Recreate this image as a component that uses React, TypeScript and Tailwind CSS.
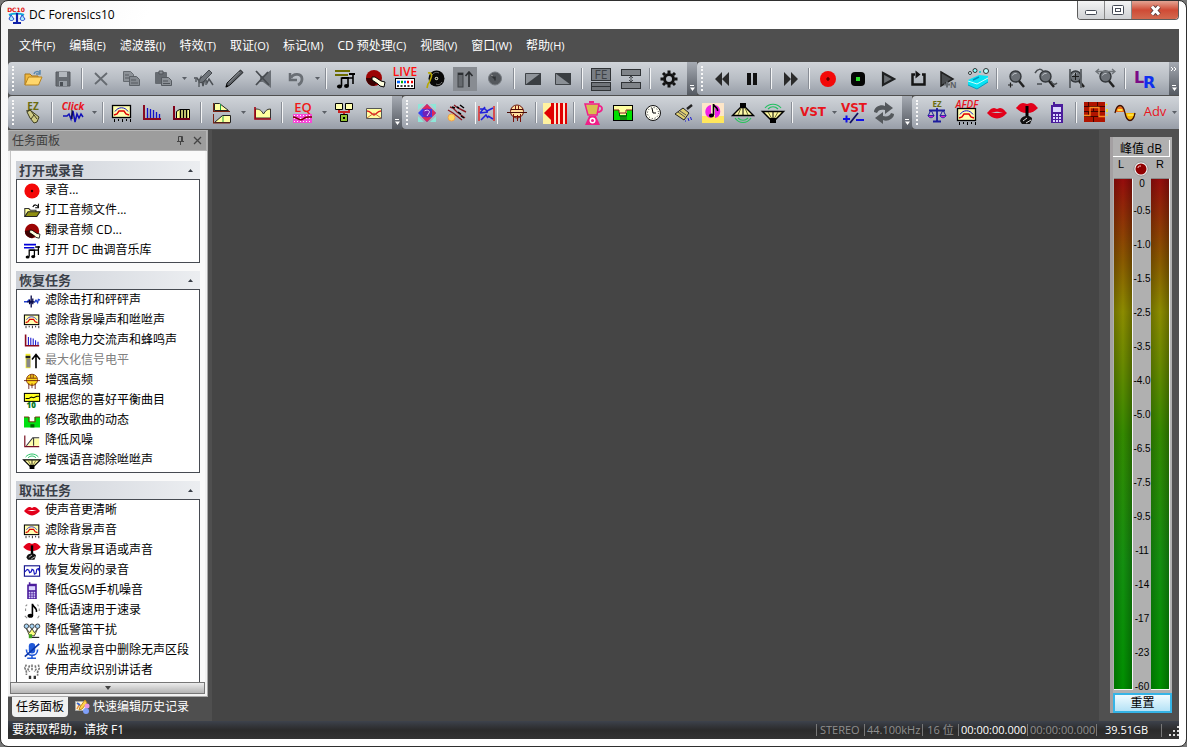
import React from "react";
import type { ReactNode } from "react";

function Icon({ children }: { children: ReactNode }) {
  return (
    <svg width="24" height="24" viewBox="0 0 24 24" fill="none" aria-hidden="true" className="shrink-0 overflow-visible">
      {children}
    </svg>
  );
}

const sans = "Open Sans, sans-serif";
const wide = "DejaVu Sans, sans-serif";

const notes = (bar: string) => (
  <>
    <path d="M2 4h15M2 8h13" stroke={bar} strokeWidth="2" />
    <path d="M8.500 19v-8h6M20 6v11M15 19v-8h5" stroke="#000" strokeWidth="1.600" />
    <ellipse cx="6.500" cy="19.500" rx="2.500" ry="2" fill="#000" />
    <ellipse cx="13.500" cy="19" rx="2.500" ry="2" fill="#000" />
    <path d="M16 7h6M9 11h7" stroke="#000" strokeWidth="2" />
  </>
);

const meterBox = (
  <>
    <rect x="2.500" y="4.500" width="18" height="12" fill="#ffffb0" stroke="#000" strokeWidth="1.300" />
    <path d="M5 10.500c3-5 10-5 13 0" stroke="#1818d0" />
    <path d="M4 14l3-1 2-3h5l2 3 3 1" stroke="#e00000" strokeWidth="1.400" />
    <path d="M4.500 18v3M8.500 18v2M12.500 18v3M16.500 18v2M20.500 18v3" stroke="#000" />
  </>
);

const lips = (
  <path d="M2 12c2-2 4-5 7-5 1.500 0 2 1 3 1s1.500-1 3-1c3 0 5 3 7 5-3 3-6 5.500-10 5.500S5 15 2 12zM6 12h12l-5-1.200h-2z" fill="#e2001a" fillRule="evenodd" />
);

const lens = (
  <>
    <circle cx="11.500" cy="9.500" r="5.500" fill="#6b7076" stroke="#33373b" strokeWidth="1.400" />
    <path d="M8.500 8.500c1-2 2-2 4-2" stroke="#c4c9ce" />
    <path d="M15 14l5 6" stroke="#222" strokeWidth="2.500" />
  </>
);

const shush = (
  <>
    <path d="M1 7c2-2 4-5 7-5 2 0 3 1 4 1s2-1 4-1c3 0 5 3 7 5-3 3-6 5-11 5S4 10 1 7z" fill="#e2001a" />
    <path d="M10.500 5h3v11h-3z" fill="#000" />
    <path d="M5 20c1-4 4-5 7-5 4 0 5 2 5 3l-2 5H7z" fill="#111" />
    <path d="M8 20l4-3M11 22l5-3" stroke="#ddd" />
  </>
);

const phone = (
  <>
    <path d="M6 4h2V1h2v2h8v19H6z" fill="#4a1c9c" />
    <rect x="8" y="6" width="8" height="5" fill="#dcd5ff" />
    <path d="M8 14h2M11 14h2M14 14h2M8 17h2M11 17h2M14 17h2M8 20h2M11 20h2M14 20h2" stroke="#dcd5ff" strokeWidth="2" />
  </>
);

const scales = (
  <>
    <path d="M12 7v14M4 9.500h16M8 20.500h8" stroke="#1c1c9c" strokeWidth="1.800" />
    <path d="M6 9l-3 6h6zM18 9l-3 6h6z" stroke="#1c1c9c" />
    <path d="M3 14.500c1 3 5 3 6 0zM15 14.500c1 3 5 3 6 0z" fill="#d818d8" stroke="#1c1c9c" strokeWidth="0.800" />
  </>
);

const tube = (
  <>
    <circle cx="12" cy="10.500" r="6.500" fill="#ffdf9c" stroke="#6a1208" />
    <path d="M6 8.500h12M6 11.500h16M2 11.500h4" stroke="#4a0a04" />
    <path d="M10.500 5v3M13.500 5v3M8.500 13v8M12.500 14v6M15.500 13v8M9 15.500h7" stroke="#7a1208" />
  </>
);

const cone = (
  <>
    <path d="M1.500 10.500h21l-8 8h-5z" fill="#fff9a0" stroke="#000" strokeWidth="1.500" />
    <path d="M7 11l4 7M17 11l-4 7" stroke="#6a6a30" />
    <path d="M12 11v7" stroke="#000" />
    <path d="M9 17h6v5H9z" fill="#000" />
    <path d="M4 7c4-5 12-5 16 0M7 8c3-3 7-3 10 0" stroke="#20c060" strokeWidth="1.200" />
  </>
);

const spectrum = (
  <>
    <path d="M4 4v14h17" stroke="#8a0a20" strokeWidth="2" />
    <path d="M7.500 7v10M10.500 8v9M13.500 9v8M16.500 11v6M19.500 13v4" stroke="#1010cc" strokeWidth="1.300" />
  </>
);

const wave = <path d="M2 13h4l2-3 2 5 2-9 2 13 2-8 2 3 2-5 2 3" stroke="#1010c0" strokeWidth="1.500" />;

const redDisc = (
  <>
    <circle cx="12" cy="12" r="8" fill="#f40808" />
    <path d="M12 10v4M10 12h4" stroke="#400" strokeWidth="1.200" />
  </>
);

const ripDisc = (
  <>
    <circle cx="11" cy="11" r="8" fill="#9c0404" />
    <path d="M3 11a8 8 0 0 0 8 8l3-3-6-5z" fill="#3e0202" />
    <path d="M9 10l3 0 6 4 4 1-1 5-4-1-2-2-6-4z" fill="#ffffe0" stroke="#000" />
  </>
);

const noteSingle = (
  <>
    <path d="M12.500 18V3c0 4 6 4 5 10" stroke="#000" strokeWidth="2" />
    <ellipse cx="10" cy="18" rx="3.500" ry="2.500" fill="#000" />
  </>
);

type Item =
  | { kind: "button"; label: string; art: ReactNode; menu?: boolean; pressed?: boolean }
  | { kind: "sep" };

const b = (label: string, art: ReactNode, menu = false, pressed = false): Item => ({ kind: "button", label, art, menu, pressed });
const sep: Item = { kind: "sep" };

const fileTools: Item[] = [
  b("打开", <Icon>
    <path d="M4 18V7h5l2 2h6v3" fill="#f0b93e" stroke="#a97417" />
    <path d="M4 18l3.500-8H21l-3.500 8z" fill="#ffd66b" stroke="#b98420" />
    <path d="M13 7c1-3 4-3 6-1M19 3v4h-4" stroke="#5b88ad" strokeWidth="1.500" />
  </Icon>),
  b("保存", <Icon>
    <path d="M5 5h14v14H5z" fill="#686d73" stroke="#565b61" />
    <path d="M8 5h8v5H8z" fill="#b3b8be" />
    <path d="M8 14h8v5H8z" fill="#999fa6" />
    <path d="M9 15h3v4H9z" fill="#4a4f55" />
  </Icon>),
  sep,
  b("删除", <Icon><path d="M6 6l12 12M18 6L6 17" stroke="#666b71" strokeWidth="1.800" /></Icon>),
  b("复制", <Icon>
    <path d="M4.500 4.500h7l3 3v7h-10z" fill="#8d9298" stroke="#666b71" />
    <path d="M10.500 9.500h7l3 3v6h-10z" fill="#858a90" stroke="#5d6268" />
    <path d="M6 8h4M6 11h4M12 13h5M12 16h7" stroke="#565b61" />
  </Icon>),
  b("粘贴", <Icon>
    <rect x="4" y="5" width="12" height="12" rx="1" fill="#666b71" />
    <path d="M8 4h4v3H8z" fill="#8d9298" stroke="#50555b" />
    <path d="M10.500 10.500h7l3 3v5h-10z" fill="#8c9197" stroke="#565b61" />
    <path d="M12 14h5M12 16.500h7" stroke="#50555b" />
  </Icon>, true),
  b("波形编辑", <Icon>
    <path d="M2 11h3l2 3 2-4 2 9 2-8 2 5 2-4 4 6" stroke="#4c5055" strokeWidth="1.500" />
    <path d="M17 3l3 3-9 9-4 1 1-4z" fill="#6f747a" stroke="#45494e" />
    <path d="M7 12v8M14 13v5M4 12v3" stroke="#5a5f65" strokeWidth="1.500" />
  </Icon>),
  b("铅笔", <Icon>
    <path d="M18.500 3l2.500 2.500L8 18l-4 2 1-4z" fill="#5a5e63" stroke="#17191b" />
    <path d="M17.500 5L7 15.500" stroke="#92979c" />
    <path d="M3.500 20.500l1-3 2 2z" fill="#000" />
  </Icon>),
  b("静音", <Icon>
    <path d="M8 9h3l8-6v18l-8-6H8z" fill="#6a6f75" />
    <path d="M4 4l13 14M16 5L4 18" stroke="#484c51" strokeWidth="1.800" />
  </Icon>),
  b("撤消", <Icon>
    <path d="M6 6v7h7" stroke="#666b71" strokeWidth="2.500" />
    <path d="M7 11c2-5 11-5 11 1 0 3-2 5-4 6" stroke="#6a6f75" strokeWidth="2.800" />
  </Icon>, true),
  sep,
  b("调音", <Icon>{notes("#6b6b00")}</Icon>),
  b("翻录", <Icon>{ripDisc}</Icon>),
  b("实时", <Icon>
    <text x="12" y="9" textAnchor="middle" fontFamily={sans} fontSize="12" fontWeight="600" fill="#ff1010">LIVE</text>
    <rect x="2.500" y="11.500" width="19" height="10" fill="#fff" stroke="#000" />
    <path d="M4 15h3M11 15h2" stroke="#06f" strokeWidth="2.400" />
    <path d="M8 15h2" stroke="#0a0" strokeWidth="2.400" />
    <path d="M14 15h2M18 15h2" stroke="#e00" strokeWidth="2.400" />
    <path d="M4 19h16" stroke="#000" strokeWidth="1.600" strokeDasharray="2 1.500" />
  </Icon>),
  b("唱片", <Icon>
    <circle cx="13.500" cy="11.500" r="8" fill="#080808" />
    <path d="M9 8c2-3 5-3 7-2M19 15c-2 3-4 3-6 2" stroke="#777" />
    <circle cx="13.500" cy="11.500" r="1.800" fill="#c8c8b0" />
    <circle cx="13.500" cy="11.500" r="0.800" fill="#000" />
    <path d="M5 6c4-1 4 3 3 5s-1 4-3 6l-1 4" stroke="#b8a800" strokeWidth="1.600" />
  </Icon>),
  b("最大化", <Icon>
    <rect x="5" y="6" width="5" height="14" fill="#666a6f" stroke="#3f4347" />
    <path d="M5 7h5" stroke="#2c2f32" strokeWidth="2" />
    <path d="M16 20V5M12.500 9L16 5l3.500 4" stroke="#2a2d30" strokeWidth="1.600" />
  </Icon>, false, true),
  b("标记点", <Icon>
    <circle cx="12" cy="11.500" r="6.500" fill="#54585d" stroke="#74797f" />
    <path d="M9 9l3 3M12 9.500v4" stroke="#2f3235" strokeWidth="1.500" />
    <path d="M8 8l2 1" stroke="#999" />
  </Icon>),
  sep,
  b("淡入", <Icon><path d="M4.500 6.500h15v11h-15z" fill="#8f949a" stroke="#3f4347" /><path d="M4 18L20 6v12z" fill="#3a3e42" /></Icon>),
  b("淡出", <Icon><path d="M4.500 6.500h15v11h-15z" fill="#8a8f95" stroke="#3f4347" /><path d="M4 6h16v12z" fill="#3a3e42" /></Icon>),
  sep,
  b("FE", <Icon>
    <rect x="2.500" y="1.500" width="19" height="12" fill="#787d83" stroke="#303336" />
    <text x="12" y="12" textAnchor="middle" fontFamily={sans} fontSize="12" fill="#3d4145">FE</text>
    <rect x="2.500" y="15.500" width="19" height="4" fill="#707479" stroke="#303336" />
    <rect x="2.500" y="19.500" width="19" height="4" fill="#707479" stroke="#303336" />
  </Icon>),
  b("间隔", <Icon>
    <rect x="2.500" y="2.500" width="19" height="6" fill="#808489" stroke="#303336" />
    <rect x="2.500" y="15.500" width="19" height="6" fill="#808489" stroke="#303336" />
    <path d="M12 9v6M10 11l2-2 2 2M10 13l2 2 2-2" stroke="#45494d" />
  </Icon>),
  sep,
  b("设置", <Icon>
    <circle cx="12" cy="12" r="4.500" stroke="#111" strokeWidth="3" />
    <path d="M12 3.500v3M12 17.500v3M3.500 12h3M17.500 12h3M6 6l2 2M16 16l2 2M18 6l-2 2M8 16l-2 2" stroke="#111" strokeWidth="3" />
  </Icon>),
];

const playTools: Item[] = [
  b("后退", <Icon><path d="M12 5v14l-7-7zM19 5v14l-7-7z" fill="#2a2a2a" /></Icon>),
  b("暂停", <Icon><path d="M7 6h4v12H7zM13 6h4v12h-4z" fill="#111" /></Icon>),
  sep,
  b("前进", <Icon><path d="M6 5v14l7-7zM13 5v14l7-7z" fill="#2a2a2a" /></Icon>),
  sep,
  b("录音", <Icon>{redDisc}</Icon>),
  b("停止", <Icon><rect x="5" y="5" width="14" height="14" rx="4" fill="#050505" /><path d="M10 10h4v4h-4z" fill="#2be02b" /></Icon>),
  b("播放", <Icon><path d="M7 6l11 6-11 6z" fill="#6b6f73" stroke="#1f2122" strokeWidth="2.200" /></Icon>),
  b("循环", <Icon><path d="M9 7.500H6.500v10h12v-10H16" stroke="#151515" strokeWidth="2.500" /><path d="M9.500 3.500l5 4-5 4z" fill="#151515" /></Icon>),
  b("播放标记", <Icon>
    <path d="M5 5l12 7-12 7z" fill="#4a4d50" stroke="#222" strokeWidth="1.500" />
    <path d="M8 17.500h6M11 14.500v6" stroke="#666b70" strokeWidth="2" />
    <text x="14" y="21" fontFamily={sans} fontSize="8" fontWeight="700" fill="#5c6064">N</text>
  </Icon>),
  b("清洁", <Icon>
    <path d="M2 13l11-5 9 1v6l-11 7-9-4z" fill="#08e4f4" />
    <path d="M2 14l9 3 11-6" stroke="#c8ffff" />
    <path d="M7 13l6-3" stroke="#0090c0" strokeWidth="1.500" />
    <path d="M2 18l9 4 11-7" stroke="#00a0c0" />
    <circle cx="4" cy="6" r="1.500" stroke="#333" fill="#dff" /><circle cx="9" cy="3.500" r="2" stroke="#333" fill="#8ff" /><circle cx="20" cy="4" r="2.500" stroke="#333" fill="#bff" /><circle cx="14" cy="5" r="1" fill="#0cc" />
  </Icon>),
  sep,
  b("缩放", <Icon>{lens}<path d="M4 18h5M6.500 15.500v5" stroke="#222" strokeWidth="1.200" /></Icon>),
  b("缩小", <Icon>{lens}<path d="M1 6c3-5 6-4 8-2M3 17h5M17 14c2 4 4 4 6 2" stroke="#4a4e52" strokeWidth="1.500" /></Icon>),
  b("选区放大", <Icon>{lens}<path d="M6 2v19M17 2v19" stroke="#5a5f64" strokeWidth="1.800" /><path d="M8 9.500h7M11.500 6v7" stroke="#1c1c1c" /></Icon>),
  b("全部显示", <Icon>{lens}<path d="M2 4.500h19M5 2L2 4.500 5 7M18 2l3 2.500L18 7" stroke="#6e7378" strokeWidth="1.300" /></Icon>),
  sep,
  b("左右声道", <Icon>
    <text x="2" y="16" fontFamily={wide} fontSize="16" fontWeight="700" fill="#7b0b86">L</text>
    <text x="11" y="21" fontFamily={wide} fontSize="16" fontWeight="700" fill="#1030ee">R</text>
  </Icon>),
];

const filterTools: Item[] = [
  b("EZ", <Icon><text x="12" y="9" textAnchor="middle" fontFamily={sans} fontSize="10" fontWeight="700" fill="#6a6c10">EZ</text><path d="M6 11l3-2 9 7-2 5-3 1-4-5z" fill="#cfcb86" stroke="#3c3c20" /><path d="M10 10l6 8M13 14l-3 4M5 10l5-1" stroke="#3c3c20" /></Icon>),
  sep,
  b("Click", <Icon><text x="12" y="9" textAnchor="middle" fontFamily={sans} fontSize="10" fontWeight="700" fontStyle="italic" fill="#e8141c">Click</text><path d="M2 15h4l2-2 2 5 2-8 2 11 2-8 2 4 2-4 2 3" stroke="#1010b8" strokeWidth="1.500" /><path d="M11 9v9" stroke="#000" /></Icon>, true),
  sep,
  b("背景噪声", <Icon>{meterBox}</Icon>),
  b("频谱", <Icon>{spectrum}</Icon>),
  b("谐波", <Icon><path d="M4 5v13h3" stroke="#800018" strokeWidth="2" /><path d="M6.500 17.500v-7l3-2h10v9z" fill="#ffff90" stroke="#000" /><path d="M3 18h17" stroke="#700018" strokeWidth="2" /><path d="M10.500 9v8M13.500 9v8M16.500 9v8" stroke="#000" strokeWidth="1.500" /></Icon>),
  sep,
  b("滤波", <Icon>
    <path d="M4.500 2.500h5l9 7h-14z" fill="#ffffa0" stroke="#222" />
    <path d="M4.500 21.500l8-7h8v7z" fill="#ffffa0" stroke="#222" />
    <path d="M10.500 3v6M13 15v6" stroke="#20a040" />
    <path d="M3.500 2v8M3.500 13v9M3 10.500h17M3 22h17" stroke="#7a2010" />
  </Icon>, true),
  b("陷波", <Icon><path d="M4.500 17V8c5 0 6 2 8 5 2-3 3-5 7-5v9z" fill="#ffffa0" stroke="#333" /><path d="M4 6v12h16" stroke="#a00010" strokeWidth="1.600" /></Icon>),
  sep,
  b("EQ", <Icon><text x="12" y="11" textAnchor="middle" fontFamily={sans} fontSize="13" fontWeight="600" fill="#f01818">EQ</text><rect x="2" y="13" width="19" height="9" fill="#f848d8" /><path d="M3.500 14v7M6.500 14v7M9.500 14v7M12.500 14v7M15.500 14v7M18.500 14v7" stroke="#fff" strokeDasharray="1 2" /><path d="M2 16c5 0 7 5 10 2s4-2 9-2" stroke="#700" strokeWidth="1.500" /></Icon>, true),
  b("混合", <Icon>
    <path d="M3.500 2.500h7v6h-7zM13.500 2.500h7v6h-7z" fill="#ffffb0" stroke="#000" />
    <path d="M7 9v2h10V9M12 11v3" stroke="#c82020" strokeWidth="2" />
    <path d="M8.500 13.500h7v7h-7z" fill="#90c030" stroke="#000" /><path d="M11 16h2v2h-2z" fill="#000" />
  </Icon>),
  b("交叉", <Icon><path d="M4.500 7.500h15v10h-15z" fill="#ffffa0" stroke="#555" /><path d="M5 10c4 0 5 4 7 4s3-4 7-4" stroke="#e02020" strokeWidth="1.500" /><path d="M5 17l7-5 7 5" stroke="#c87040" /></Icon>),
];

const effectTools: Item[] = [
  b("混响", <Icon><path d="M3 3h6L3 9zM15 3h6v6zM3 15l6 6H3zM21 15v6h-6z" fill="#8ee6d8" /><path d="M12 3l9 9-9 9-9-9z" fill="#3440f0" /><path d="M12 3l5 5H7zM21 12l-4 4V8zM12 21l-5-5h10z" fill="#e02858" /><circle cx="12" cy="12" r="4.500" fill="#7020b8" /><path d="M9.500 10c3-2 6 0 4.500 2l-2 3" stroke="#e8d8ff" /></Icon>),
  b("立体声", <Icon><path d="M5 6l3 1 4 4 8 6M9 4l4 3 8 4M3 9l5 3 9 7" stroke="#8a1820" strokeWidth="1.400" /><path d="M7 6l3 1M13 11l3 2M16 15l3 2M12 6l2 1M15 4l4 3" stroke="#000" strokeWidth="1.500" /><circle cx="6.500" cy="16.500" r="3.500" fill="#ffd860" stroke="#f0a050" /></Icon>),
  b("时间", <Icon><path d="M0.500 1v22M22.500 1v22" stroke="#f7f7f7" /><path d="M4 5v15M19 5v15" stroke="#e02828" strokeWidth="1.500" /><path d="M5 8h5l2 2 6-3M5 12l8-1M10 6l-5 6M6 19l5-5 2 3M13 15l5 3" stroke="#2222db" strokeWidth="1.500" /></Icon>),
  b("电子管", <Icon>{tube}</Icon>),
  sep,
  b("多重", <Icon><path d="M0 2h10v21H0z" fill="#fff2a0" /><path d="M1 12l7-7v14z" fill="#e00000" /><path d="M9 2h15v21H9z" fill="#ffe6d0" /><path d="M8 2h3v21H8zM13 2h2v21h-2zM17 2h3v21h-3zM22 2h2v21h-2z" fill="#e00000" /></Icon>),
  sep,
  b("搅拌器", <Icon><path d="M4 3h14l-2 11H7z" fill="#d8c050" stroke="#f02088" strokeWidth="1.500" /><path d="M8 1h5" stroke="#f02088" strokeWidth="2" /><path d="M17 5c6-1 5 7-1 6" stroke="#f02088" strokeWidth="1.800" /><path d="M8 15h7l4 9H4z" fill="#f02088" /><circle cx="11.500" cy="19.500" r="3" fill="#fff" /><circle cx="11.500" cy="19.500" r="1.500" fill="#f02088" /></Icon>),
  b("动态", <Icon>
    <rect x="2.500" y="4.500" width="19" height="15" fill="#ffffa0" stroke="#000" />
    <path d="M3 9h5v5h8V9h5v10H3z" fill="#00e000" />
    <path d="M9 15h7v4H9z" fill="#109010" />
    <path d="M3 9h5v3h7V9h6" stroke="#802020" />
    <path d="M8.500 12v3h7v-3" stroke="#005000" />
  </Icon>),
  b("时钟", <Icon><circle cx="12" cy="12" r="7.500" fill="#fffff4" stroke="#111" /><path d="M11 7l1 5h3" stroke="#000" /><circle cx="12" cy="12" r="5.500" stroke="#333" strokeDasharray="1 1.880" /></Icon>),
  b("清扫", <Icon><path d="M21 4l-5 4" stroke="#222" strokeWidth="2.500" /><path d="M12 7l6 5-5 7-9-6z" fill="#e0d070" stroke="#222" /><path d="M7 11l7 5M9 10l6 4" stroke="#555" /><path d="M14 20h1M17 17l1 3M19.500 16l1 3" stroke="#1515d0" /></Icon>),
  b("音调", <Icon><path d="M1 2h22v20H1z" fill="#fde6c8" /><path d="M1 15h22v7H1z" fill="#ffe75c" /><path d="M10 4v13c-8-1-7-12 0-13zM14 4c7 1 7 12 0 13z" fill="#f020e8" /><path d="M12.500 14V3c0 3 5 3 4 7" stroke="#000" strokeWidth="1.600" /><ellipse cx="10.500" cy="14.500" rx="2.500" ry="2" fill="#000" /></Icon>),
  b("锥形扩散", <Icon><path d="M1.500 14.500h21l-8-8h-5z" fill="#fff9a8" stroke="#000" strokeWidth="1.400" /><path d="M12 14V6" stroke="#000" /><path d="M7 14l3-7M17 14l-3-7" stroke="#6a6a30" /><path d="M9 2h6v5H9z" fill="#000" /><path d="M4 17c4 6 12 6 16 0M7 17c3 3 7 3 10 0" stroke="#27c45a" strokeWidth="1.200" /></Icon>),
  b("语音增强", <Icon>{cone}</Icon>),
  sep,
  b("VST", <Icon><text x="12" y="15" textAnchor="middle" fontFamily={wide} fontSize="12" fontWeight="700" fill="#e8141c">VST</text></Icon>, true),
  b("VST 增减", <Icon><text x="12" y="11" textAnchor="middle" fontFamily={wide} fontSize="12" fontWeight="700" fill="#e8141c">VST</text><path d="M1 18h7M4.500 14.500v7M14 19h8" stroke="#1010e8" strokeWidth="2" /><path d="M16 12L8 22" stroke="#101060" strokeWidth="1.800" /></Icon>),
  b("刷新", <Icon><path d="M2 11c0-5 7-8 11-6V1l8 6-8 6V9c-4-1-7 0-8 3zM22 13c0 5-7 8-11 6v4l-8-6 8-6v4c4 1 7 0 8-3z" fill="#54585c" /></Icon>),
];

const forensicTools: Item[] = [
  b("EZ 取证", <Icon><text x="12" y="6" textAnchor="middle" fontFamily={sans} fontSize="8" fontWeight="700" fill="#6a6c10">EZ</text>{scales}</Icon>),
  b("AFDF", <Icon><g transform="translate(0 3)">{meterBox}</g><text x="12" y="7" textAnchor="middle" fontFamily={sans} fontSize="10" fontWeight="600" fontStyle="italic" fill="#e8141c">AFDF</text></Icon>),
  b("清晰", <Icon>{lips}</Icon>),
  b("耳语", <Icon>{shush}</Icon>),
  b("手机", <Icon>{phone}</Icon>),
  sep,
  b("砖墙", <Icon><path d="M1 1h21v20H1z" fill="#b01400" /><path d="M1 5.500h21M1 10.500h21M1 15.500h21M5.500 1v5M14.500 1v5M10.500 6v5M5.500 11v5M16.500 11v5M10.500 16v5" stroke="#400400" /><path d="M1 14.500h6v-8h9v9h6" stroke="#ff8a20" strokeWidth="1.300" /><path d="M23 4l1-1M24 8v3M23.500 14h1" stroke="#ffe800" strokeWidth="1.500" /></Icon>),
  b("正弦", <Icon><path d="M2 11c1-8 8-8 10 0z" fill="#f07018" /><path d="M12 12c2 9 9 9 10 0z" fill="#f8b800" /><path d="M2 12C4 2 10 2 12 12s8 10 10 0" stroke="#401000" strokeWidth="1.300" /><path d="M4.500 9h5M14.500 14h6" stroke="#ffe040" strokeWidth="2" /></Icon>),
  b("Adv", <Icon><text x="12" y="15" textAnchor="middle" fontFamily={sans} fontSize="13" fill="#e8141c">Adv</text></Icon>, true),
];

function Toolbar({ label, items, last = false, overflow = true, more = false }: { label: string; items: Item[]; last?: boolean; overflow?: boolean; more?: boolean }) {
  return (
    <div
      role="toolbar"
      aria-label={label}
      className={
        "flex h-[33px] items-stretch overflow-hidden rounded-l-sm bg-linear-to-b from-[#d0d4d9] via-[#b9bec5] to-[#989ea8] " +
        (last ? "min-w-0 flex-1" : "shrink-0")
      }
    >
      <span className="flex w-2.5 shrink-0 justify-center py-1">
        <span className="border-l-2 border-dotted border-[#f8f8f8]" />
      </span>
      {items.map((item, i) =>
        item.kind === "sep" ? (
          <span key={i} className="flex w-2 shrink-0 justify-center py-1.5">
            <span className="w-0.5 border-l border-[#888d95] bg-[#f4f5f6]" />
          </span>
        ) : (
          <React.Fragment key={i}>
            <button
              type="button"
              aria-label={item.label}
              className={"flex items-center justify-center " + (item.menu ? "w-[33px]" : "w-[30px] shrink-0")}
            >
              <span className={item.pressed ? "bg-[#888c92]" : undefined}>{item.art}</span>
            </button>
            {item.menu && (
              <button type="button" aria-label={item.label + "菜单"} className="flex w-2.5 shrink-0 items-center justify-center">
                <svg width="5" height="3" viewBox="0 0 5 3" aria-hidden="true"><path d="M0 0h5L2.500 3z" fill="#5a5f66" /></svg>
              </button>
            )}
          </React.Fragment>
        )
      )}
      {overflow && (
        <>
          <span className={last ? "flex-1" : "w-[3px]"} />
          <button type="button" aria-label="更多按钮" className="flex w-2.5 shrink-0 flex-col items-center justify-between bg-linear-to-b from-[#a6abb3] to-[#555a62] py-1">
            <svg width="6" height="6" viewBox="0 0 6 6" aria-hidden="true">
              {more && <path d="M0 1l2 2-2 2M3 1l2 2-2 2" stroke="#fff" fill="none" />}
            </svg>
            <svg width="6" height="6" viewBox="0 0 6 6" aria-hidden="true"><path d="M1 0h4v1H1zM1 2.500h5L3.500 6z" fill="#fff" /></svg>
          </button>
        </>
      )}
    </div>
  );
}

const menus = ["文件(F)", "编辑(E)", "滤波器(I)", "特效(T)", "取证(O)", "标记(M)", "CD 预处理(C)", "视图(V)", "窗口(W)", "帮助(H)"];

type Task = { text: string; art: ReactNode; disabled?: boolean };
const groups: { title: string; tasks: Task[] }[] = [
  {
    title: "打开或录音",
    tasks: [
      { text: "录音...", art: <><circle cx="12" cy="12" r="9.500" fill="#f40808" /><circle cx="12" cy="12" r="1.500" fill="#300" /></> },
      { text: "打工音频文件...", art: <><path d="M3 19V9h5l2 2h7v3" fill="#ffff9a" stroke="#333" strokeWidth="1.300" /><path d="M3 19l4-6h15l-4 6z" fill="#8e8e10" stroke="#222" strokeWidth="1.300" /><path d="M13 7c2-4 5-3 7 0M20 3v5h-4" stroke="#000" strokeWidth="1.300" /></> },
      { text: "翻录音频 CD...", art: <><circle cx="12" cy="12" r="9" fill="#9c0404" /><path d="M3 12a9 9 0 0 0 9 9l4-3-8-7z" fill="#3e0202" /><path d="M9 11l3 0 6 4 4 1-1 5-4-1-2-2-6-4z" fill="#ffffe0" stroke="#000" /></> },
      { text: "打开 DC 曲调音乐库", art: notes("#0000d8") },
    ],
  },
  {
    title: "恢复任务",
    tasks: [
      { text: "滤除击打和砰砰声", art: <><path d="M2 13h4l2-2 2 4M15 14l2-3 2 3 1-4 2 1" stroke="#2040d0" strokeWidth="1.700" /><path d="M11 5v15M9 10v6M13 9v7M6 13h9" stroke="#000040" strokeWidth="1.600" /></> },
      { text: "滤除背景噪声和咝咝声", art: meterBox },
      { text: "滤除电力交流声和蜂鸣声", art: spectrum },
      { text: "最大化信号电平", disabled: true, art: <><path d="M4 3h6v18H4z" fill="#f0ea30" /><path d="M5 9h5v11H5z" fill="#888" /><path d="M4 7h6" stroke="#222" strokeWidth="3" /><path d="M17 21V5M12 10l5-6 5 6" stroke="#000" strokeWidth="2" /></> },
      { text: "增强高频", art: <><circle cx="12" cy="10.500" r="7" fill="#ffd820" stroke="#7a2a08" /><path d="M6 8.500h12M6 11.500h16M2 11.500h4M10.500 4v4M13.500 4v4M8 15v7M12 15v6M16 15v7" stroke="#5a0a04" /></> },
      { text: "根据您的喜好平衡曲目", art: <><rect x="2.500" y="2.500" width="19" height="10" fill="#ffff20" stroke="#000" strokeWidth="1.300" /><path d="M4 9h4l3-2 3 1 4-2h3" stroke="#000" strokeWidth="1.300" /><text x="11" y="21" textAnchor="middle" fontFamily={sans} fontSize="10" fontWeight="800" fill="#087a28">10</text></> },
      { text: "修改歌曲的动态", art: <><path d="M2 7h7v6h6V7h7v13H2z" fill="#00e010" /><path d="M2 7h6v6h8V7h6" stroke="#803010" strokeWidth="1.200" /><path d="M10 16h5v4h-5z" fill="#006000" /></> },
      { text: "降低风噪", art: <><path d="M6 18l7-9h8v9z" fill="#ffffa8" /><path d="M3 5v14h18" stroke="#781020" strokeWidth="1.500" /><path d="M5 18L13 8h8M14 8v10" stroke="#333" strokeWidth="1.300" /></> },
      { text: "增强语音滤除咝咝声", art: cone },
    ],
  },
  {
    title: "取证任务",
    tasks: [
      { text: "使声音更清晰", art: lips },
      { text: "滤除背景声音", art: meterBox },
      { text: "放大背景耳语或声音", art: shush },
      { text: "恢复发闷的录音", art: <><rect x="2.500" y="5.500" width="19" height="13" fill="#fff" stroke="#10108a" strokeWidth="1.400" /><path d="M3 13l3-3 2 1 1 3 2-1 1-3 2 1 1 5 2-1 1-5 2-1 1 3" stroke="#1010c0" strokeWidth="1.400" /></> },
      { text: "降低GSM手机噪音", art: phone },
      { text: "降低语速用于速录", art: <>{noteSingle}<path d="M4 6l2-2M20 6l-1-2M3 18l3 3M21 18l-2 3M4 9v3M21 9v3" stroke="#888" strokeWidth="1.300" /></> },
      { text: "降低警笛干扰", art: <><circle cx="5" cy="6" r="2.800" fill="#a9d4f4" stroke="#222" /><circle cx="12" cy="6" r="2.800" fill="#a9d4f4" stroke="#222" /><circle cx="19" cy="6" r="2.800" fill="#a9d4f4" stroke="#222" /><path d="M5 9l4 5 3-5 3 5 4-5-4 9H9z" fill="#ffff80" stroke="#222" /><path d="M8 16h4v5H8z" fill="#40a020" /><path d="M12 20h9" stroke="#222" strokeWidth="1.500" /></> },
      { text: "从监视录音中删除无声区段", art: <><rect x="8" y="2" width="8" height="13" rx="4" fill="#2058d8" /><path d="M5 10c0 10 14 10 14 0M12 18v3M6 21h11" stroke="#2058d8" strokeWidth="2" /><path d="M3 19L21 3" stroke="#0a35a8" strokeWidth="2" /></> },
      { text: "使用声纹识别讲话者", art: <><path d="M5 4l-2 4 2 5v4M9 5l-2 5 2 3M20 4l1 5-2 4v5M16 5l1 5-2 3M12 4v8" stroke="#777" strokeWidth="2" strokeDasharray="3 1" /><path d="M8 18h3v4H8zM14 18h3v4h-3z" fill="#333" /></> },
    ],
  },
];

function TaskPanel() {
  return (
    <aside className="flex w-[200px] shrink-0 flex-col">
      <section aria-label="任务面板" className="flex min-h-0 flex-1 flex-col border-r border-b border-[#a9a9a9] bg-[#f2f2f2]">
        <header className="flex h-[21px] shrink-0 items-center border border-[#b5b5b5] bg-[#9d9d9d] pl-[3px] text-xs text-[#3f3f3f]">
          <h1 className="flex-1">任务面板</h1>
          <button type="button" aria-label="固定" className="mr-2">
            <svg width="9" height="9" viewBox="0 0 9 9" fill="none" stroke="#444" aria-hidden="true"><path d="M2.500 0.500h4v5h-4zM5.500 1v4M1 5.500h7M4.500 6v3" /></svg>
          </button>
          <button type="button" aria-label="关闭面板" className="mr-1">
            <svg width="9" height="9" viewBox="0 0 9 9" fill="none" stroke="#444" strokeWidth="1.300" aria-hidden="true"><path d="M1 1l7 7M8 1L1 8" /></svg>
          </button>
        </header>
        <div className="mx-0.5 flex min-h-0 flex-1 flex-col gap-2 overflow-hidden border-l border-[#c4c4c4] bg-[#fafafa] px-[5px] pt-2.5">
          {groups.map((g) => (
            <section key={g.title} className="shrink-0">
              <h2>
                <button type="button" className="flex h-[18px] w-full items-center justify-between bg-linear-to-r from-[#cdd1d8] to-[#eceef1] pr-[7px] pl-[3px] text-[13px] leading-[18px] font-bold text-[#3a3f48]">
                  {g.title}
                  <svg width="5" height="3" viewBox="0 0 5 3" aria-hidden="true"><path d="M0 3h5L2.500 0z" fill="#3a3f47" /></svg>
                </button>
              </h2>
              <ul className="border border-[#474b52] bg-white pb-0.5 text-xs">
                {g.tasks.map((t) => (
                  <li key={t.text}>
                    <button type="button" disabled={t.disabled} className={"flex h-5 w-full items-center gap-[5px] pl-[7px] leading-5 " + (t.disabled ? "text-[#808080]" : "text-black")}>
                      <svg width="16" height="16" viewBox="2 2 20 20" fill="none" aria-hidden="true" className="mt-0.5 shrink-0 overflow-visible">
                        {t.art}
                      </svg>
                      <span className="whitespace-nowrap">{t.text}</span>
                    </button>
                  </li>
                ))}
              </ul>
            </section>
          ))}
        </div>
        <button type="button" aria-label="向下滚动" className="mx-0.5 mb-0.5 flex h-3 shrink-0 items-center justify-center border border-[#777] bg-linear-to-b from-[#ececec] to-[#b4b4b4]">
          <svg width="6" height="4" viewBox="0 0 6 4" aria-hidden="true"><path d="M0 0h6L3 4z" fill="#444" /></svg>
        </button>
      </section>
      <div role="tablist" aria-label="面板" className="flex h-6 shrink-0 items-start text-xs">
        <button type="button" role="tab" aria-selected="true" className="ml-1 h-5 rounded-b bg-[#f0f1f1] px-1 leading-5 text-black">任务面板</button>
        <button type="button" role="tab" aria-selected="false" className="flex h-5 items-center gap-0.5 pl-1.5 leading-5 whitespace-nowrap text-white">
          <svg width="17" height="16" viewBox="0 0 17 16" aria-hidden="true">
            <path d="M1.500 2.500h10v9h-10z" fill="#fff6d8" stroke="#aaa" />
            <path d="M3 10l2-4 3 2 3-4" stroke="#e89040" fill="none" strokeWidth="1.500" />
            <path d="M11 1l2 3-5 6-3 1 1-3z" fill="#ffd24a" stroke="#c08a20" />
            <circle cx="13" cy="7" r="2.500" fill="#e898e0" /><circle cx="12" cy="12" r="3" fill="#7f9ff8" /><path d="M3 4l3 2" stroke="#3b66d0" strokeWidth="2" />
          </svg>
          快速编辑历史记录
        </button>
      </div>
    </aside>
  );
}

const scale = ["-0.5", "-1.0", "-1.5", "-2.5", "-3.5", "-4.0", "-5.0", "-6.5", "-7.5", "-9.5", "-11", "-14", "-17", "-23", "-60"];

function LevelBar({ label }: { label: string }) {
  return (
    <div
      role="meter"
      aria-label={label}
      aria-valuemin={-60}
      aria-valuemax={0}
      aria-valuenow={0}
      className="mb-[3px] w-[19px] shrink-0 border-t border-r border-b border-t-[#888] border-r-[#f5f5f5] border-b-[#f5f5f5]"
    >
      <div className="h-full w-full bg-[linear-gradient(to_bottom,#960c0c_0%,#8a5a00_16%,#8c8c00_26%,#6a8a00_36%,#348a00_50%,#149010_75%,#009000_100%)]">
        <div className="h-full w-full bg-linear-to-r from-black/20 via-transparent to-black/25" />
      </div>
    </div>
  );
}

function PeakMeter() {
  return (
    <aside aria-label="峰值表" className="flex w-20 shrink-0 flex-col bg-[#505050] pt-[7px] pr-[7px] pb-2 pl-[11px]">
      <div className="flex min-h-0 flex-1 flex-col border-l-3 border-[#a4a0a2] bg-[#b0b0b0]">
        <h2 className="mt-[3px] mr-0.5 h-[17px] shrink-0 border-r border-b border-white text-center text-xs leading-[17px] text-black">峰值 dB</h2>
        <div className="flex h-[21px] shrink-0 justify-between pr-2 pl-[5px] font-['Liberation_Sans',sans-serif] text-[11px] leading-[15px] text-black">
          <span className="w-2">L</span>
          <svg width="16" height="16" viewBox="0 0 16 16" className="mt-1" aria-hidden="true">
            <circle cx="8" cy="8" r="7" fill="#f2f2f2" stroke="#666" strokeWidth="0.500" />
            <circle cx="8" cy="8" r="5.500" fill="#900000" />
            <path d="M5 7c0-2 1-2 3-2" stroke="#ffd0d0" fill="none" />
          </svg>
          <span className="w-2">R</span>
        </div>
        <div className="flex min-h-0 flex-1 justify-between pr-0.5 pl-px">
          <LevelBar label="左声道电平" />
          <ol className="flex min-h-0 flex-1 flex-col text-center font-['Liberation_Sans',sans-serif] text-[10px] leading-3 whitespace-nowrap text-black">
            <li className="h-[5px] shrink-0">0</li>
            {scale.map((v) => (
              <li key={v} className="flex min-h-0 flex-1 items-end justify-center">{v}</li>
            ))}
          </ol>
          <LevelBar label="右声道电平" />
        </div>
        <div className="h-5 shrink-0 bg-[#505050]">
          <button type="button" className="block h-5 w-full border-2 border-[#35b4e6] bg-linear-to-b from-[#f0fbff] to-[#b4e2f6] text-xs leading-4 text-black">重置</button>
        </div>
      </div>
    </aside>
  );
}

function StatusBar() {
  const cell = "border-l border-[#777] leading-3";
  return (
    <footer className="flex h-[18px] shrink-0 items-center bg-linear-to-b from-[#3d424c] via-[#2b2b2b] to-[#333] text-[11px] whitespace-nowrap text-[#8f8f8f]">
      <p className="flex-1 pl-1 text-xs leading-[18px] text-white">要获取帮助，请按 F1</p>
      <span className={cell + " w-12 pl-[3px]"}>STEREO</span>
      <span className={cell + " w-[58px] pl-0.5"}>44.100kHz</span>
      <span className={cell + " w-9 text-center"}>16 位</span>
      <span className={cell + " w-[69px] pl-0.5 text-white"}>00:00:00.000</span>
      <span className={cell + " w-[69px] pl-0.5"}>00:00:00.000</span>
      <span className={cell + " w-[65px] pl-2 text-white"}>39.51GB</span>
      <span className={cell + " flex w-[18px] justify-end pt-0.5"}>
        <svg width="11" height="11" viewBox="0 0 11 11" fill="#ddd" aria-hidden="true"><path d="M9 0h2v2H9zM9 4h2v2H9zM9 8h2v2H9zM5 4h2v2H5zM5 8h2v2H5zM1 8h2v2H1z" /></svg>
      </span>
    </footer>
  );
}

function TitleBar() {
  return (
    <header className="flex h-7 shrink-0 items-start justify-between">
      <div className="flex items-center gap-1 pt-[5px]">
        <svg width="17" height="18" viewBox="0 0 17 18" fill="none" aria-hidden="true" className="overflow-visible">
          <text x="8" y="6" textAnchor="middle" fontFamily={wide} fontSize="6" fontWeight="700" fill="#e01010">DC10</text>
          <path d="M1 9c4-2 11-2 15 0" stroke="#10a8d8" strokeWidth="2" />
          <path d="M9 7v10M5 17h8" stroke="#1020a8" strokeWidth="2.200" />
          <path d="M3 9l-2 4c1 2 4 2 5 0zM14 9l-2 4c1 2 4 2 5 0z" stroke="#2244d0" fill="#aef" />
        </svg>
        <h1 className="text-xs text-black">DC Forensics10</h1>
      </div>
      <div className="flex h-[19px] overflow-hidden rounded-b border border-t-0 border-[#5c5c5c]">
        <button type="button" aria-label="最小化窗口" className="flex w-[27px] items-center justify-center border-r border-[#888] bg-linear-to-b from-[#f4f4f4] to-[#cfd1d4] pt-1">
          <svg width="12" height="5" viewBox="0 0 12 5" aria-hidden="true"><rect x="0.500" y="0.500" width="11" height="4" rx="1" fill="#fff" stroke="#454a55" /></svg>
        </button>
        <button type="button" aria-label="还原窗口" className="flex w-[27px] items-center justify-center border-r border-[#888] bg-linear-to-b from-[#f4f4f4] to-[#cfd1d4]">
          <svg width="12" height="10" viewBox="0 0 12 10" fill="#fff" stroke="#454a55" aria-hidden="true"><rect x="0.500" y="0.500" width="11" height="9" rx="1" /><rect x="3.500" y="3.500" width="5" height="3" /></svg>
        </button>
        <button type="button" aria-label="关闭窗口" className="flex w-[46px] items-center justify-center bg-linear-to-b from-[#e3a393] via-[#cf4a35] to-[#d2694f]">
          <svg width="13" height="11" viewBox="0 0 13 11" aria-hidden="true"><path d="M3 1.500l7 8M10 1.500l-7 8" stroke="#5a3a3a" strokeWidth="4.800" /><path d="M3 1.500l7 8M10 1.500l-7 8" stroke="#fff" strokeWidth="3" /></svg>
        </button>
      </div>
    </header>
  );
}

export default function App() {
  return (
    <div className="h-screen bg-[#777] font-['Open_Sans','Noto_Sans_CJK_SC',sans-serif]">
      <div className="flex h-full flex-col overflow-hidden rounded-lg border border-[#2f2f2f] bg-linear-115 from-[#f4f4f4] via-white via-10% to-white px-[7px] pb-[7px]">
        <TitleBar />
        <div className="flex min-h-0 flex-1 flex-col bg-[#4f4f4f]">
          <nav aria-label="主菜单" className="flex h-[33px] shrink-0 items-center gap-[14px] overflow-hidden pl-[11px] text-xs whitespace-nowrap text-white">
            {menus.map((m) => {
              const cut = m.indexOf("(");
              return (
                <button key={m} type="button" className="shrink-0">
                  {m.slice(0, cut)}
                  <span className="text-[11px]">{m.slice(cut)}</span>
                </button>
              );
            })}
          </nav>
          <div className="flex shrink-0 flex-col gap-px pb-px">
            <div className="flex">
              <Toolbar label="文件与编辑" items={fileTools} />
              <Toolbar label="播放与缩放" items={playTools} last more />
            </div>
            <div className="flex">
              <Toolbar label="滤波器" items={filterTools} />
              <Toolbar label="特效" items={effectTools} />
              <Toolbar label="取证" items={forensicTools} last overflow={false} />
            </div>
          </div>
          <div className="flex min-h-0 flex-1">
            <TaskPanel />
            <main aria-label="工作区" className="ml-1 min-w-0 flex-1 bg-[#454545]" />
            <PeakMeter />
          </div>
          <StatusBar />
        </div>
      </div>
    </div>
  );
}
